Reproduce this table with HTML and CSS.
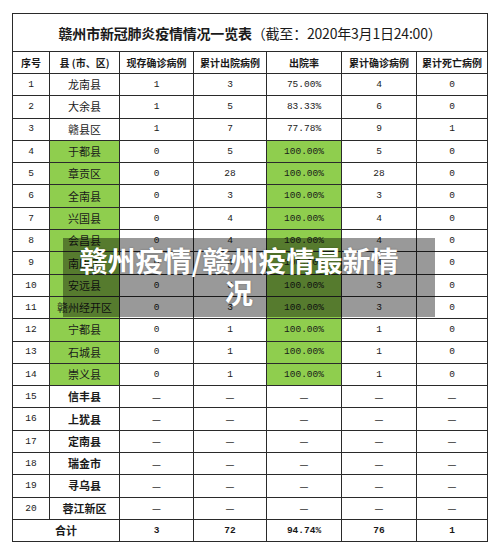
FILE: index.html
```html
<!DOCTYPE html>
<html lang="zh-CN">
<head>
<meta charset="utf-8">
<title>赣州疫情/赣州疫情最新情况</title>
<link rel="stylesheet" href="styles.css">
</head>
<body>
<div class="page">
  <table class="sheet">
    <colgroup>
      <col class="c1"><col class="c2"><col class="c3"><col class="c4"><col class="c5"><col class="c6"><col class="c7">
    </colgroup>
    <tr class="title-row">
      <td colspan="7" class="title"><b>赣州市新冠肺炎疫情情况一览表</b>（截至：2020年3月1日24:00）</td>
    </tr>
    <tr class="head">
      <th>序号</th><th>县 (市、区)</th><th>现存确诊病例</th><th>累计出院病例</th><th>出院率</th><th>累计确诊病例</th><th class="gl">累计死亡病例</th>
    </tr>
    <tr><td class="n">1</td><td class="nm">龙南县</td><td class="n">1</td><td class="n gl">3</td><td class="n">75.00%</td><td class="n">4</td><td class="n gl">0</td></tr>
    <tr><td class="n">2</td><td class="nm">大余县</td><td class="n">1</td><td class="n gl">5</td><td class="n">83.33%</td><td class="n">6</td><td class="n gl">0</td></tr>
    <tr><td class="n">3</td><td class="nm">赣县区</td><td class="n">1</td><td class="n gl">7</td><td class="n">77.78%</td><td class="n">9</td><td class="n gl">1</td></tr>
    <tr><td class="n">4</td><td class="nm g">于都县</td><td class="n">0</td><td class="n gl">5</td><td class="n g">100.00%</td><td class="n">5</td><td class="n gl">0</td></tr>
    <tr><td class="n">5</td><td class="nm g">章贡区</td><td class="n">0</td><td class="n gl">28</td><td class="n g">100.00%</td><td class="n">28</td><td class="n gl">0</td></tr>
    <tr><td class="n">6</td><td class="nm g">全南县</td><td class="n">0</td><td class="n gl">3</td><td class="n g">100.00%</td><td class="n">3</td><td class="n gl">0</td></tr>
    <tr><td class="n">7</td><td class="nm g">兴国县</td><td class="n">0</td><td class="n gl">4</td><td class="n g">100.00%</td><td class="n">4</td><td class="n gl">0</td></tr>
    <tr><td class="n">8</td><td class="nm g">会昌县</td><td class="n">0</td><td class="n gl">4</td><td class="n g">100.00%</td><td class="n">4</td><td class="n gl">0</td></tr>
    <tr><td class="n">9</td><td class="nm g">南康区</td><td class="n">0</td><td class="n gl">4</td><td class="n g">100.00%</td><td class="n">4</td><td class="n gl">0</td></tr>
    <tr><td class="n">10</td><td class="nm g">安远县</td><td class="n">0</td><td class="n gl">3</td><td class="n g">100.00%</td><td class="n">3</td><td class="n gl">0</td></tr>
    <tr><td class="n">11</td><td class="nm g">赣州经开区</td><td class="n">0</td><td class="n gl">3</td><td class="n g">100.00%</td><td class="n">3</td><td class="n gl">0</td></tr>
    <tr><td class="n">12</td><td class="nm g">宁都县</td><td class="n">0</td><td class="n gl">1</td><td class="n g">100.00%</td><td class="n">1</td><td class="n gl">0</td></tr>
    <tr><td class="n">13</td><td class="nm g">石城县</td><td class="n">0</td><td class="n gl">1</td><td class="n g">100.00%</td><td class="n">1</td><td class="n gl">0</td></tr>
    <tr><td class="n">14</td><td class="nm g">崇义县</td><td class="n">0</td><td class="n gl">1</td><td class="n g">100.00%</td><td class="n">1</td><td class="n gl">0</td></tr>
    <tr><td class="n">15</td><td class="nm b">信丰县</td><td class="d">—</td><td class="d gl">—</td><td class="d">—</td><td class="d">—</td><td class="d gl">—</td></tr>
    <tr><td class="n">16</td><td class="nm b">上犹县</td><td class="d">—</td><td class="d gl">—</td><td class="d">—</td><td class="d">—</td><td class="d gl">—</td></tr>
    <tr><td class="n">17</td><td class="nm b">定南县</td><td class="d">—</td><td class="d gl">—</td><td class="d">—</td><td class="d">—</td><td class="d gl">—</td></tr>
    <tr><td class="n">18</td><td class="nm b">瑞金市</td><td class="d">—</td><td class="d gl">—</td><td class="d">—</td><td class="d">—</td><td class="d gl">—</td></tr>
    <tr><td class="n">19</td><td class="nm b">寻乌县</td><td class="d">—</td><td class="d gl">—</td><td class="d">—</td><td class="d">—</td><td class="d gl">—</td></tr>
    <tr><td class="n">20</td><td class="nm b">蓉江新区</td><td class="d">—</td><td class="d gl">—</td><td class="d">—</td><td class="d">—</td><td class="d gl">—</td></tr>
    <tr class="total"><td colspan="2" class="nm b">合计</td><td class="n b">3</td><td class="n b gl">72</td><td class="n b">94.74%</td><td class="n b">76</td><td class="n b gl">1</td></tr>
  </table>
  <div class="banner">赣州疫情/赣州疫情最新情况</div>
</div>
</body>
</html>
```

FILE: styles.css
```css
html, body {
  margin: 0;
  padding: 0;
  background: #ffffff;
}

.page {
  position: relative;
  width: 500px;
  height: 557px;
  padding: 13px 0 0 12px;
  box-sizing: border-box;
}

.sheet {
  border-collapse: collapse;
  table-layout: fixed;
  width: 475px;
  color: #1a1a1a;
  font-family: "Noto Sans CJK SC", sans-serif;
  border: 1px solid #111;
}

.c1 { width: 37px; }
.c2 { width: 70px; }
.c3 { width: 74px; }
.c4 { width: 73px; }
.c5 { width: 75px; }
.c6 { width: 75px; }
.c7 { width: 71px; }

.sheet td, .sheet th {
  border: 1px solid #2a2a2a;
  padding: 0;
  text-align: center;
  vertical-align: middle;
  height: 21.3px;
  line-height: 1;
  white-space: nowrap;
  overflow: hidden;
}

.sheet .gl {
  border-left-color: #8a8a8a;
}

.title-row td.title {
  height: 37px;
  font-size: 14px;
  font-weight: 400;
  letter-spacing: -0.2px;
}

.title b {
  font-weight: 700;
}

.head th {
  height: 21px;
  font-size: 10px;
  font-weight: 700;
}

.sheet td.n {
  font-family: "Liberation Mono", "DejaVu Sans Mono", monospace;
  font-size: 9.5px;
}

.sheet td.nm {
  font-size: 11px;
}

.sheet td.d {
  font-size: 10px;
  color: #333;
}

.sheet td.g {
  background: #8fce4e;
}

.sheet td.b {
  font-weight: 700;
}

.banner {
  position: absolute;
  left: 63px;
  top: 238px;
  width: 372px;
  height: 79px;
  box-sizing: border-box;
  padding: 6px 30px 0 10px;
  background: rgba(0, 0, 0, 0.4);
  color: #ffffff;
  font-family: "Noto Sans CJK SC", sans-serif;
  font-size: 28px;
  font-weight: 700;
  line-height: 32px;
  text-align: center;
  text-shadow: 0 0 2px rgba(0, 0, 0, 0.3);
}
```
